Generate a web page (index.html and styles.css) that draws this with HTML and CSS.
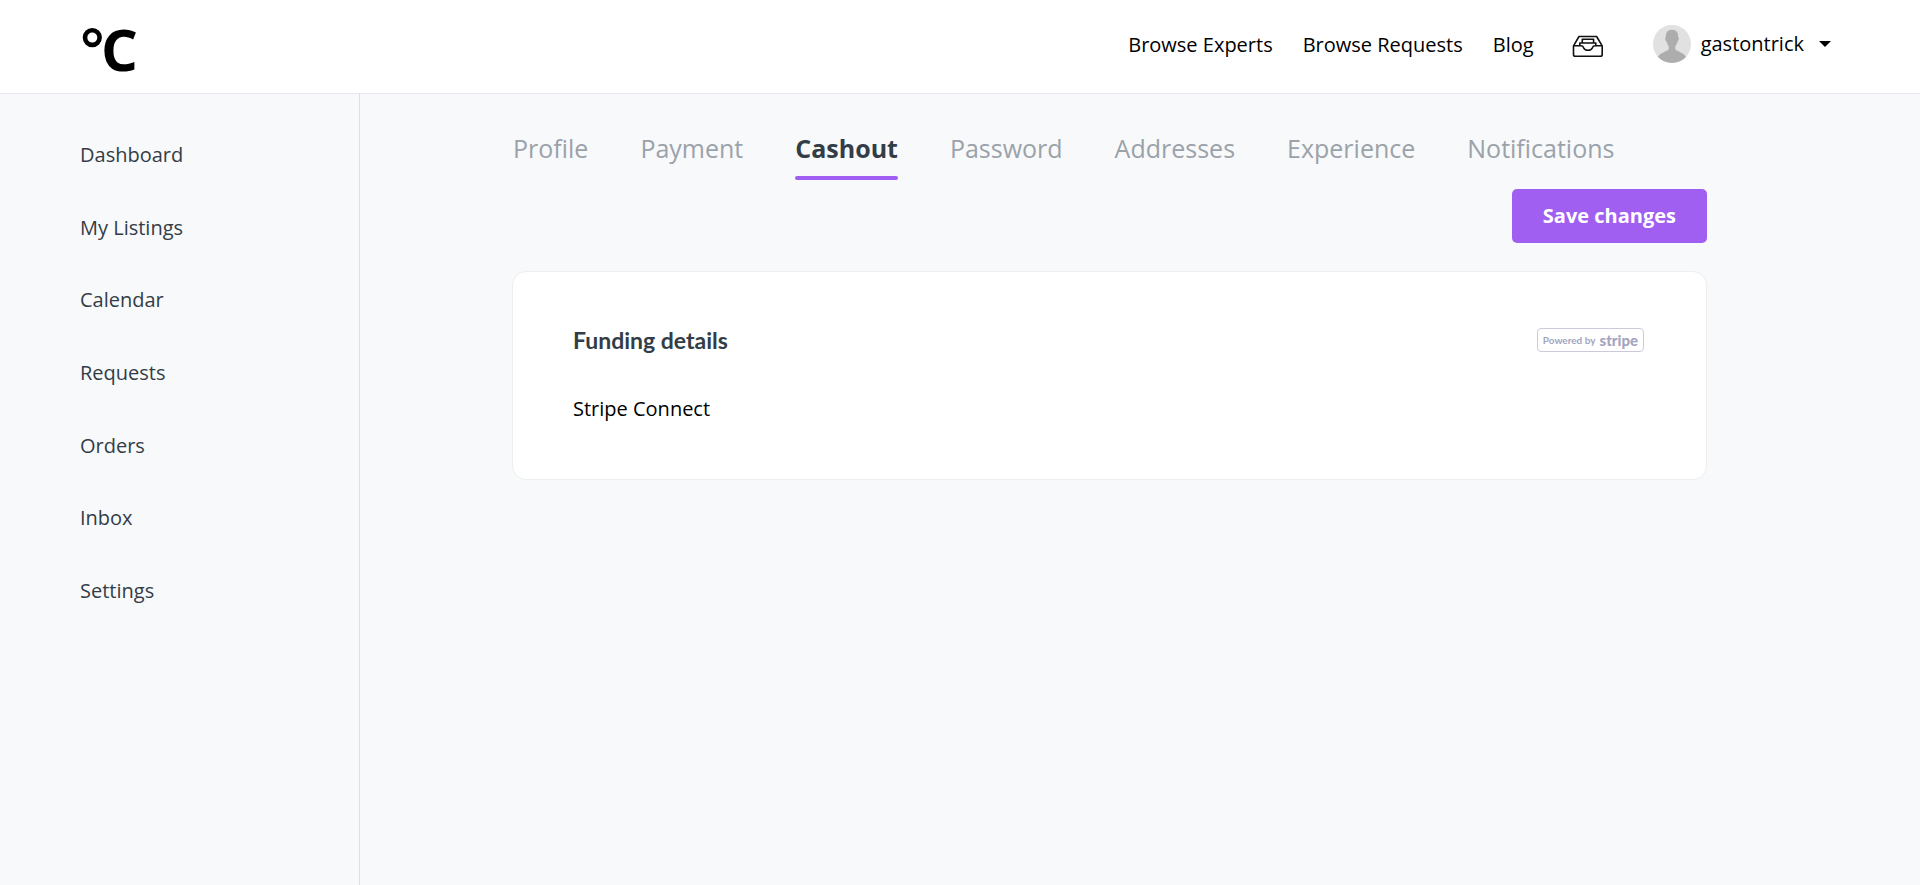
FILE: index.html
```html
<!DOCTYPE html>
<html lang="en">
<head>
<meta charset="utf-8">
<meta name="viewport" content="width=device-width, initial-scale=1">
<title>Cashout</title>
<link rel="stylesheet" href="styles.css">
</head>
<body>
<header class="topbar">
  <a class="logo" href="#" aria-label="°C">
    <svg width="60" height="84" viewBox="0 0 60 84">
      <circle cx="12.300" cy="32.600" r="7.300" fill="none" stroke="#000" stroke-width="4.600"/>
      <text x="21" y="66">C</text>
    </svg>
  </a>
  <nav class="topnav" aria-label="Main">
    <a href="#">Browse Experts</a>
    <a href="#">Browse Requests</a>
    <a href="#">Blog</a>
    <a class="tray" href="#" aria-label="Inbox">
      <svg width="32" height="23" viewBox="0 0 32 23" fill="none" stroke="#111" stroke-width="1.6" stroke-linejoin="round" stroke-linecap="round">
        <path d="M1.5 10.8 7 1.5H24.600L30.200 10.800V19.500Q30.200 21.300 28.400 21.300H3.300Q1.500 21.300 1.500 19.500V10.800H8.800Q11 10.800 11.600 12.700Q12.500 15.300 16 15.300Q19.500 15.300 20.400 12.700Q21 10.800 23.200 10.800H30.200"/>
        <path d="M10.300 7.500V4.300H21.600V7.500M7.800 10.500V8H23.800V10.500"/>
      </svg>
    </a>
  </nav>
  <button class="user" type="button">
    <svg class="avatar" width="38" height="38" viewBox="0 0 38 38">
      <clipPath id="disc"><circle cx="19" cy="19" r="19"/></clipPath>
      <g clip-path="url(#disc)">
        <rect width="38" height="38" fill="#e1e1e1"/>
        <path fill="#adadad" d="M19 4.800C23.600 4.800 25.500 8 25.100 12C26.300 12.500 25.700 16 24.500 16.600C24.100 18.800 23.100 20.300 22.300 21.200V24C23.500 27 31.500 27 33.500 33V38H4.500V33C6.500 27 14.500 27 15.700 24V21.200C14.900 20.300 13.900 18.800 13.500 16.600C12.300 16 11.700 12.500 12.900 12C12.500 8 14.400 4.800 19 4.800Z"/>
      </g>
    </svg>
    <span>gastontrick</span>
    <svg class="caret" width="12" height="6" viewBox="0 0 12 6"><path d="M0 0H12L6 6Z"/></svg>
  </button>
</header>
<div class="layout">
  <nav class="sidebar" aria-label="Account">
    <div class="menu">
      <a href="#">Dashboard</a>
      <a href="#">My Listings</a>
      <a href="#">Calendar</a>
      <a href="#">Requests</a>
      <a href="#">Orders</a>
      <a href="#">Inbox</a>
      <a href="#">Settings</a>
    </div>
  </nav>
  <main class="content">
    <nav class="tabs" aria-label="Settings">
      <a href="#">Profile</a>
      <a href="#">Payment</a>
      <a class="active" href="#" aria-current="page">Cashout</a>
      <a href="#">Password</a>
      <a href="#">Addresses</a>
      <a href="#">Experience</a>
      <a href="#">Notifications</a>
    </nav>
    <button class="save" type="button">Save changes</button>
    <section class="card">
      <div class="card-head">
        <h2>Funding details</h2>
        <a class="badge" href="#"><span>Powered by</span><strong>stripe</strong></a>
      </div>
      <p>Stripe Connect</p>
    </section>
  </main>
</div>
</body>
</html>
```
FILE: styles.css
```css
* {
  box-sizing: border-box;
}

body {
  margin: 0;
  min-height: 100vh;
  display: flex;
  flex-direction: column;
  background: #f8f9fb;
  color: #000;
  font: 20px/28px "Open Sans", sans-serif;
}

a {
  color: inherit;
  text-decoration: none;
}

button {
  border: 0;
  font: inherit;
  cursor: pointer;
}

.topbar {
  display: flex;
  align-items: center;
  min-height: 94px;
  padding: 0 89px 0 80px;
  background: #fff;
  border-bottom: 1px solid #e7e9ec;
}

.logo {
  display: flex;
  margin-right: auto;
  font-size: 58px;
  font-weight: 700;
}

.topnav {
  display: flex;
  align-items: center;
  gap: 30px;
  padding-bottom: 4px;
}

.tray {
  display: flex;
  margin: 0 20px 0 8px;
  padding-top: 4px;
}

.user {
  display: flex;
  align-items: center;
  gap: 10px;
  margin-left: 29px;
  padding: 0 0 6px;
  background: none;
  color: #000;
}

.caret {
  margin-left: 5px;
}

.layout {
  flex: 1;
  display: flex;
}

.sidebar {
  flex: 0 0 360px;
  padding: 25px 40px 40px 80px;
  border-right: 1px solid #dce1e8;
  color: #333d47;
}

.menu {
  display: grid;
  grid-auto-rows: 1fr;
  align-items: center;
  min-height: 508px;
}

.content {
  flex: 1;
  display: flex;
  flex-direction: column;
  padding: 34px 213px 40px 152px;
}

.tabs {
  display: flex;
  flex-wrap: wrap;
  gap: 52px;
  padding-left: 1px;
  color: #9ba2aa;
  font-size: 25px;
  line-height: 40px;
}

.active {
  color: #333d47;
  font-weight: 700;
}

.active::after {
  content: "";
  display: block;
  height: 4px;
  margin-top: 8px;
  border-radius: 2px;
  background: #a15ff2;
}

.save {
  align-self: flex-end;
  margin: 9px 0 28px;
  padding: 13px 31px;
  border-radius: 5px;
  background: #a15ff2;
  color: #fff;
  font-weight: 700;
}

.card {
  padding: 52px 62px 56px 60px;
  border: 1px solid #eceef0;
  border-radius: 14px;
  background: #fff;
}

.card-head {
  display: flex;
  align-items: center;
  justify-content: space-between;
  margin-bottom: 39px;
}

.card h2 {
  margin: 0;
  color: #333d47;
  font: 700 23px/32px Lato, sans-serif;
}

.card p {
  margin: 0;
}

.badge {
  display: flex;
  align-items: center;
  gap: 4px;
  height: 24px;
  padding: 0 5px;
  border: 1px solid #c9cbdc;
  border-radius: 4px;
  color: #a3a5c0;
  font-family: Lato, sans-serif;
  font-size: 10px;
  font-weight: 700;
}

.badge strong {
  font-size: 15px;
  font-weight: 900;
}
```
